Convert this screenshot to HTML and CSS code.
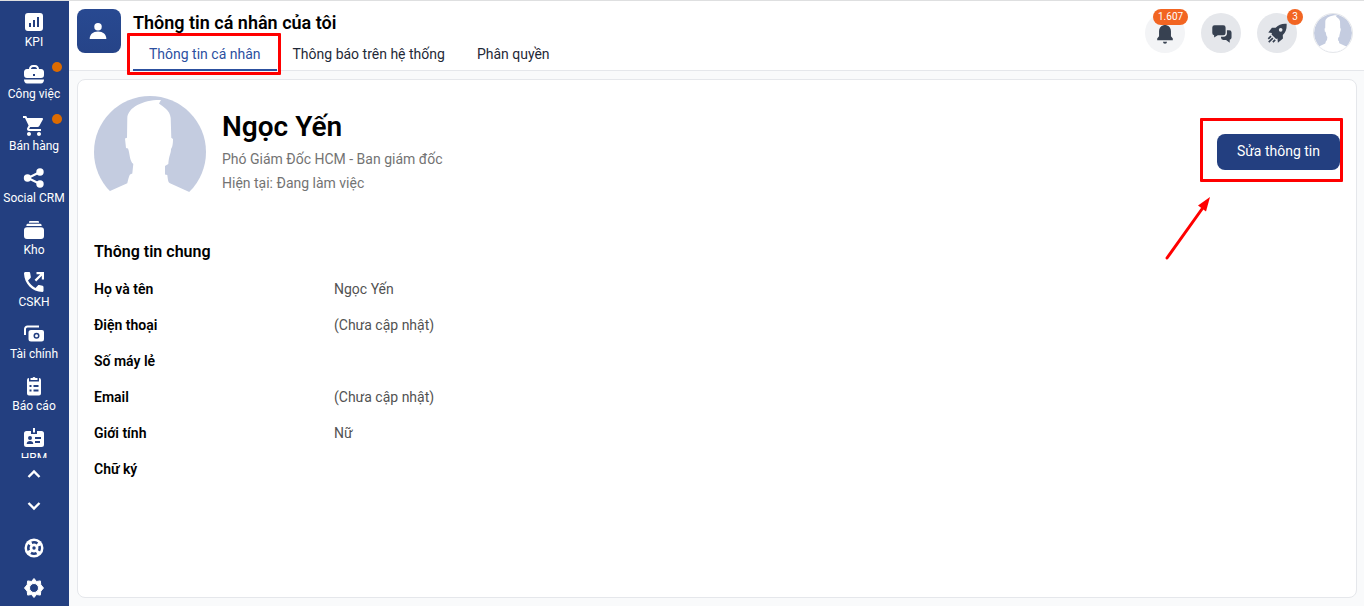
FILE: index.html
```html
<!DOCTYPE html>
<html lang="vi">
<head>
    <meta charset="UTF-8">
    <meta name="viewport" content="width=device-width, initial-scale=1.0">
    <title>Thông tin cá nhân của tôi</title>
    <link rel="stylesheet" href="styles.css">
</head>
<body>
    <!-- Avatar mặc định, dùng chung -->
    <svg class="defs" width="0" height="0" aria-hidden="true">
        <symbol id="avatar" viewBox="0 0 112 112">
            <circle cx="56" cy="56" r="56" fill="#c4cce0"/>
            <path fill="#fff" d="M67 4L65 7.500C69 11 76 14 76.700 22L77.300 41.700L79 43C79 49 78 52 77 53C77 58 75 59 74.300 68L71 70V78.500L73.300 79C74 84 74 86 76 87.300L95.300 96L95 112H17L16 95L33.300 87.300C34 84 35 80 36 78.500L38.300 77.500L39.300 68C35.500 65 36 58 34 52.500L32 52L31 42.500L33 41.700L33.300 22C34 11 50 3.500 67 4Z"/>
        </symbol>
    </svg>

    <div class="app">
        <aside class="sidebar">
            <nav class="menu">
                <a href="#" class="menu-item">
                    <svg viewBox="0 0 24 24"><path fill-rule="evenodd" d="M6 3h12a3 3 0 0 1 3 3v12a3 3 0 0 1-3 3H6a3 3 0 0 1-3-3V6a3 3 0 0 1 3-3zM7 13v4h2v-4zM11 10v7h2v-7zM15 7v10h2V7z"/></svg>
                    <span>KPI</span>
                </a>
                <a href="#" class="menu-item">
                    <svg viewBox="0 0 24 24"><path fill-rule="evenodd" d="M7 7c0-2 1.500-4 4-4h2c2.500 0 4 2 4 4h2c2 0 3 1.500 3 3v3c0 2-1 3-3 3H5c-2 0-3-1-3-3v-3c0-1.500 1-3 3-3zM9 7h6c0-1-.8-2-2-2h-2c-1.200 0-2 1-2 2zM11 12v2h2v-2z"/><path d="M2 17.500h20c0 2-1 4-3 4H5c-2 0-3-2-3-4z"/></svg>
                    <span>Công việc</span>
                    <i class="dot"></i>
                </a>
                <a href="#" class="menu-item">
                    <svg viewBox="0 0 24 24"><path d="M7 18c-1.100 0-1.990.9-1.990 2S5.900 22 7 22s2-.9 2-2-.9-2-2-2zM1 2v2h2l3.600 7.590-1.350 2.450c-.16.28-.25.61-.25.96 0 1.100.9 2 2 2h12v-2H7.420c-.14 0-.25-.11-.25-.25l.03-.12.9-1.630h7.450c.75 0 1.410-.41 1.750-1.030l3.580-6.490c.08-.14.12-.31.12-.48 0-.55-.45-1-1-1H5.210l-.94-2H1zm16 16c-1.100 0-1.990.9-1.990 2s.89 2 1.990 2 2-.9 2-2-.9-2-2-2z"/></svg>
                    <span>Bán hàng</span>
                    <i class="dot"></i>
                </a>
                <a href="#" class="menu-item">
                    <svg viewBox="0 0 24 24"><path d="M6 12L18 6M6 12l12 6" fill="none" stroke="#fff" stroke-width="2"/><circle cx="5.500" cy="12" r="3.700"/><circle cx="18" cy="6" r="3.700"/><circle cx="18" cy="18" r="3.700"/></svg>
                    <span>Social CRM</span>
                </a>
                <a href="#" class="menu-item">
                    <svg viewBox="0 0 24 24"><path d="M8 3h8a1 1 0 0 1 1 1v.8H7V4a1 1 0 0 1 1-1zM6 5.800h12a1.500 1.500 0 0 1 1.500 2.200h-15A1.500 1.500 0 0 1 6 5.800zM5 9.200h14a3 3 0 0 1 3 3V18a3 3 0 0 1-3 3H5a3 3 0 0 1-3-3v-5.800a3 3 0 0 1 3-3z"/></svg>
                    <span>Kho</span>
                </a>
                <a href="#" class="menu-item">
                    <svg viewBox="0 0 24 24"><path d="M21.500 17c0-.7-.3-1.100-.9-1.200l-3.500-.7c-.5-.1-.9 0-1.200.4L13.500 18C10.200 16.300 7.700 13.800 6 10.500L8.500 8c.3-.3.4-.8.300-1.200L8.200 3.300c-.1-.8-.5-1.300-1.200-1.300H3.500C2.600 2 2 2.600 2 3.500 2.500 14 10 21.500 20.500 22c.6 0 1-.5 1-1.200z"/><path d="M14.500 2H22v7.500h-2.200V5.800l-5.600 5.600-1.600-1.600 5.600-5.600h-3.700z"/></svg>
                    <span>CSKH</span>
                </a>
                <a href="#" class="menu-item">
                    <svg viewBox="0 0 24 24"><path d="M3 13V7a2.500 2.500 0 0 1 2.500-2.500H17" fill="none" stroke="#fff" stroke-width="2"/><path fill-rule="evenodd" d="M9 8h11a2 2 0 0 1 2 2v7a2.500 2.500 0 0 1-2.500 2.500H9A2.500 2.500 0 0 1 6.500 17v-6.500A2.500 2.500 0 0 1 9 8zM14.500 10.700a3 3 0 1 0 0 6 3 3 0 0 0 0-6z"/><circle cx="14.500" cy="13.700" r="1.500"/></svg>
                    <span>Tài chính</span>
                </a>
                <a href="#" class="menu-item">
                    <svg viewBox="0 0 24 24"><path fill-rule="evenodd" d="M7 4v3.500h10V4a2 2 0 0 1 2 2v13.500a2 2 0 0 1-2 2H7a2 2 0 0 1-2-2V6a2 2 0 0 1 2-2zM7.500 11v2h2v-2zM11.500 11v2h5v-2zM7.500 15.500v2h2v-2zM11.500 15.500v2h5v-2z"/><path d="M8.500 6V4h2a1.600 1.600 0 0 1 3 0h2v2z"/></svg>
                    <span>Báo cáo</span>
                </a>
                <a href="#" class="menu-item">
                    <svg viewBox="0 0 24 24"><path fill-rule="evenodd" d="M4.500 5H9v3h6V5h4.500A2.500 2.500 0 0 1 22 7.500v11a2.500 2.500 0 0 1-2.500 2.500h-15A2.500 2.500 0 0 1 2 18.500v-11A2.500 2.500 0 0 1 4.500 5zM8 10a2 2 0 1 0 0 4 2 2 0 0 0 0-4zM4.700 18h6.600c0-2-1.300-3-3.300-3s-3.300 1-3.300 3zM13 11v2h6v-2zM13 15v2h5v-2z"/><path d="M11 2h2v4.500h-2z"/></svg>
                    <span>HRM</span>
                </a>
            </nav>
            <div class="scroll-btns">
                <button type="button" aria-label="Lên"><svg viewBox="0 0 24 24"><path d="M6.500 15l5.500-5.500 5.500 5.500" fill="none" stroke="#fff" stroke-width="2.400"/></svg></button>
                <button type="button" aria-label="Xuống"><svg viewBox="0 0 24 24"><path d="M6.500 9l5.500 5.500L17.500 9" fill="none" stroke="#fff" stroke-width="2.400"/></svg></button>
            </div>
            <div class="sidebar-bottom">
                <a href="#" aria-label="Trợ giúp">
                    <svg viewBox="0 0 24 24"><circle cx="12" cy="12" r="9.500"/><circle cx="12" cy="12" r="5.700" fill="none" stroke="#233f80" stroke-width="2.600" stroke-dasharray="5.900 3.054" stroke-dashoffset="2.950"/><circle cx="12" cy="12" r="1.700" fill="#233f80"/></svg>
                </a>
                <a href="#" aria-label="Cài đặt">
                    <svg viewBox="0 0 24 24"><path fill-rule="evenodd" d="M12 2.500l2.500 3 3.800-.6.500 3.900L21.500 12l-2.700 3.200-.5 3.900-3.800-.6-2.500 3-2.500-3-3.800.6-.5-3.900L2.500 12l2.700-3.200.5-3.900 3.800.6zM12 7.500a4.500 4.500 0 1 0 0 9 4.500 4.500 0 0 0 0-9z" stroke="#fff" stroke-width="1" stroke-linejoin="round"/></svg>
                </a>
            </div>
        </aside>

        <div class="main">
            <header class="header">
                <div class="page-icon">
                    <svg viewBox="0 0 24 24"><circle cx="12" cy="7" r="4.500"/><path d="M2 21.500c0-5.500 4-9 10-9s10 3.500 10 9z"/></svg>
                </div>
                <div class="page-head">
                    <h1>Thông tin cá nhân của tôi</h1>
                    <nav class="tabs">
                        <a href="#" class="tab active">Thông tin cá nhân<i class="mark mark-tab"></i></a>
                        <a href="#" class="tab">Thông báo trên hệ thống</a>
                        <a href="#" class="tab">Phân quyền</a>
                    </nav>
                </div>
                <div class="actions">
                    <button type="button" class="round light" aria-label="Thông báo">
                        <svg viewBox="0 0 24 24"><path d="M12 2a1.500 1.500 0 0 0-1.500 1.500C7 4.300 5.500 7 5.500 10v5.500L3.500 18v2h17v-2l-2-2.500V10c0-3-1.500-5.700-5-6.500A1.500 1.500 0 0 0 12 2zM9.800 21.500h4.400a2.200 2.200 0 0 1-4.400 0z"/></svg>
                        <span class="badge">1.607</span>
                    </button>
                    <button type="button" class="round" aria-label="Tin nhắn">
                        <svg viewBox="0 0 24 24"><path d="M5 3.500h9.500A2.500 2.500 0 0 1 17 6v6a2.500 2.500 0 0 1-2.500 2.500H8.500L4.500 17v-2.500A2.500 2.500 0 0 1 2.500 12V6A2.500 2.500 0 0 1 5 3.500z"/><path d="M18.500 9h2.500a2.500 2.500 0 0 1 2.500 2.500v5.500a2.500 2.500 0 0 1-2 2.300V22.500L17.500 19.500H14.500A2.500 2.500 0 0 1 12 17v-1h3c2 0 3.500-1.500 3.500-3.500z"/></svg>
                    </button>
                    <button type="button" class="round" aria-label="Khởi chạy">
                        <svg viewBox="0 0 24 24"><path fill-rule="evenodd" d="M22.500 2c.3 5.500-.8 9-4.200 12.200l.2 3.800L13 22.500l-.5-4.500-1.500.5-5-5 .5-1.500L2.500 11.500 6.500 6.200l4 .2C14 3 17.500 1.500 22.500 2zM16 6.500a2 2 0 1 0 0 4 2 2 0 0 0 0-4z"/><path d="M5.500 15.500L2.500 18.500M7.500 17.500L3 22M10 19.500L7.500 22" fill="none" stroke="#374151" stroke-width="1.800"/></svg>
                        <span class="badge">3</span>
                    </button>
                    <button type="button" class="round user" aria-label="Tài khoản">
                        <svg><use href="#avatar"/></svg>
                    </button>
                </div>
            </header>

            <main class="card">
                <section class="profile">
                    <svg class="avatar"><use href="#avatar"/></svg>
                    <div class="profile-text">
                        <h2>Ngọc Yến</h2>
                        <p>Phó Giám Đốc HCM - Ban giám đốc</p>
                        <p>Hiện tại: Đang làm việc</p>
                    </div>
                    <div class="edit">
                        <button type="button" class="btn">Sửa thông tin</button>
                        <i class="mark mark-edit"></i>
                        <svg class="arrow" viewBox="0 0 48 66"><path d="M3 63L38 14" stroke="#f00" stroke-width="3" stroke-linecap="round"/><path d="M46 2L42 16.500 34 10.500z" fill="#f00"/></svg>
                    </div>
                </section>

                <section class="info">
                    <h3>Thông tin chung</h3>
                    <dl>
                        <dt>Họ và tên</dt>
                        <dd>Ngọc Yến</dd>
                        <dt>Điện thoại</dt>
                        <dd>(Chưa cập nhật)</dd>
                        <dt>Số máy lẻ</dt>
                        <dd></dd>
                        <dt>Email</dt>
                        <dd>(Chưa cập nhật)</dd>
                        <dt>Giới tính</dt>
                        <dd>Nữ</dd>
                        <dt>Chữ ký</dt>
                        <dd></dd>
                    </dl>
                </section>
            </main>
        </div>
    </div>
</body>
</html>
```

FILE: styles.css
```css
:root {
    --primary: #233f80;
    --border: #e5e7eb;
    --dark: #374151;
    --orange: #f26522;
    --mark: #ff0000;
}

* {
    box-sizing: border-box;
    margin: 0;
    padding: 0;
}

body {
    font-family: Roboto, "Liberation Sans", sans-serif;
    font-size: 14px;
    line-height: 20px;
    color: #000;
    background: #f9fafb;
}

a {
    color: inherit;
    text-decoration: none;
}

button {
    font: inherit;
    border: none;
    background: none;
    cursor: pointer;
}

svg {
    display: block;
}

.defs {
    position: absolute;
}

.app {
    display: flex;
    height: 100vh;
    border-top: 1px solid #dedfe0;
}

/* Thanh menu trái */
.sidebar {
    display: flex;
    flex-direction: column;
    flex: none;
    width: 69px;
    padding-right: 1px;
    background: var(--primary);
    color: #fff;
}

.sidebar svg {
    width: 24px;
    height: 24px;
    fill: #fff;
}

.menu {
    flex: 1;
    min-height: 0;
    overflow: hidden;
    padding-top: 9px;
}

.menu-item {
    position: relative;
    display: flex;
    flex-direction: column;
    align-items: center;
    height: 52px;
    font-size: 12px;
    line-height: 16px;
    white-space: nowrap;
}

.dot {
    position: absolute;
    top: 0;
    right: 6px;
    width: 10px;
    height: 10px;
    border-radius: 50%;
    background: #dd6b00;
}

.scroll-btns button {
    display: flex;
    align-items: center;
    justify-content: center;
    width: 100%;
    height: 32px;
}

.sidebar-bottom {
    display: flex;
    flex-direction: column;
    align-items: center;
    gap: 16px;
    padding: 14px 0 6px;
}

.main {
    display: flex;
    flex-direction: column;
    flex: 1;
    min-width: 0;
}

/* Header */
.header {
    display: flex;
    flex: none;
    height: 70px;
    padding: 8px 11px 0 8px;
    background: #fff;
    border-bottom: 1px solid var(--border);
}

.page-icon {
    display: flex;
    align-items: center;
    justify-content: center;
    width: 44px;
    height: 44px;
    margin-right: 12px;
    padding-right: 2px;
    border-radius: 8px;
    background: linear-gradient(180deg, #284991, #264488);
}

.page-icon svg {
    width: 20px;
    height: 20px;
    fill: #fff;
}

.page-head h1 {
    font-size: 18px;
    font-weight: 600;
    line-height: 28px;
}

.tabs {
    display: flex;
    color: #1f2937;
}

.tab {
    position: relative;
    height: 34px;
    padding: 7px 16px 0;
    border-bottom: 2px solid transparent;
}

.tab.active {
    color: #2c509f;
    border-bottom-color: #2c509f;
}

.actions {
    display: flex;
    gap: 16px;
    margin-left: auto;
    padding-top: 4px;
}

.round {
    position: relative;
    display: flex;
    align-items: center;
    justify-content: center;
    width: 40px;
    height: 40px;
    border-radius: 50%;
    background: var(--border);
}

.round.light {
    background: #f3f4f6;
}

.round svg {
    width: 22px;
    height: 22px;
    fill: var(--dark);
}

.round.user {
    overflow: hidden;
    border: 1px solid var(--border);
    background: #fff;
}

.round.user svg {
    width: 38px;
    height: 38px;
}

.badge {
    position: absolute;
    top: -4px;
    left: 75%;
    min-width: 16px;
    padding: 0 5px;
    border-radius: 8px;
    background: var(--orange);
    color: #fff;
    font-size: 10px;
    line-height: 16px;
}

.light .badge {
    left: 8px;
}

/* Nội dung */
.card {
    flex: 1;
    margin: 8px 7px 8px 8px;
    padding: 16px;
    border: 1px solid var(--border);
    border-radius: 8px;
    background: #fff;
}

.profile {
    display: flex;
}

.avatar {
    width: 112px;
    height: 112px;
}

.profile-text {
    margin-left: 16px;
    padding-top: 14px;
    color: #737373;
    line-height: 24px;
}

.profile-text h2 {
    margin-bottom: 3px;
    color: #000;
    font-size: 28px;
    font-weight: 600;
    line-height: 34px;
}

.edit {
    position: relative;
    align-self: flex-start;
    margin: 38px 0 0 auto;
}

.btn {
    height: 36px;
    padding: 0 20px 2px;
    border-radius: 8px;
    background: var(--primary);
    color: #fff;
}

.info {
    margin-top: 32px;
}

.info h3 {
    font-size: 16px;
    font-weight: 600;
    line-height: 24px;
}

.info dl {
    display: grid;
    grid-template-columns: 240px 1fr;
    row-gap: 16px;
    margin-top: 15px;
}

.info dt {
    font-weight: 600;
}

.info dd {
    color: #525252;
}

/* Khung đỏ đánh dấu */
.mark {
    position: absolute;
    border: 3px solid var(--mark);
    border-radius: 1px;
    pointer-events: none;
}

.mark-tab {
    inset: -4px -4px -6px -6px;
}

.mark-edit {
    inset: -16px -3px -12px -17px;
}

.arrow {
    position: absolute;
    top: 61px;
    left: -53px;
    width: 48px;
    height: 66px;
}
```
